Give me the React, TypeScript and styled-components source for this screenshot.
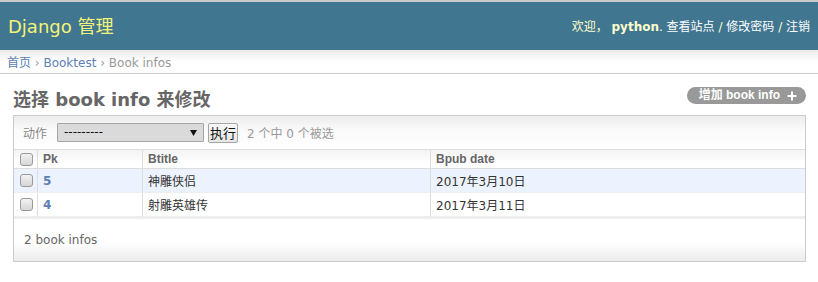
import React from 'react';
import styled, { createGlobalStyle } from 'styled-components';

const GlobalStyle = createGlobalStyle`
  body {
    margin: 0;
    background: #fff;
    color: #333;
    font-family: "DejaVu Sans", "Noto Sans CJK SC", sans-serif;
    font-size: 12px;
  }
  a {
    color: #5b80b2;
    text-decoration: none;
  }
`

const Header = styled.header`
  display: flex;
  justify-content: space-between;
  align-items: center;
  height: 48px;
  padding: 0 8px;
  border-top: 2px solid #c9c9c9;
  background: #417690;
  color: #ffc;
`

const Branding = styled.h1`
  margin: 0;
  padding-top: 1px;
  font-size: 18px;
  line-height: 22px;
  font-weight: normal;
  color: #f4f379;
`

const UserTools = styled.div`
  padding-top: 1px;
  font-size: 12px;
  line-height: 14px;

  strong {
    font-weight: bold;
  }

  a {
    color: #fff;
  }
`

const Breadcrumbs = styled.nav`
  padding: 5px 7px 2px;
  line-height: 16px;
  color: #999;
  background: linear-gradient(#ebebeb, #fff 12px);
  border-bottom: 1px solid #ccc;
`

const Content = styled.main`
  padding: 0 12px 0 13px;
`

const TitleRow = styled.div`
  display: flex;
  justify-content: space-between;
  align-items: flex-start;
  padding-top: 13px;
  margin-bottom: 4px;
`

const Title = styled.h1`
  margin: 2px 0 0;
  font-size: 18px;
  line-height: 22px;
  font-weight: bold;
  color: #666;
`

const AddLink = styled.a`
  display: flex;
  align-items: center;
  gap: 7px;
  height: 17px;
  padding: 0 9px 0 12px;
  border-radius: 9px;
  background: #999;
  font-family: "Liberation Sans", "Noto Sans CJK SC", sans-serif;
  font-size: 12px;
  font-weight: bold;
  line-height: 17px;

  &:link, &:visited {
    color: #fff;
  }
`

const Module = styled.div`
  border: 1px solid #ccc;
`

const Actions = styled.div`
  display: flex;
  align-items: center;
  height: 33px;
  padding: 0 9px;
  border-bottom: 1px solid #ddd;
  background: linear-gradient(#ececec, #fafafa 14px, #fff);
  color: #888;
`

const SelectWrap = styled.span`
  position: relative;
  display: inline-flex;
  margin: 0 4px 0 10px;
`

const ActionSelect = styled.select`
  appearance: none;
  width: 147px;
  height: 19px;
  margin: 0;
  padding: 0 0 0 6px;
  border: 1px solid #a6a6a6;
  border-radius: 1px;
  background: #dadada;
  color: #111;
  font-family: "DejaVu Sans", sans-serif;
  font-size: 12px;
  line-height: 17px;
`

const SelectArrow = styled.svg`
  position: absolute;
  right: 7px;
  top: 7px;
  pointer-events: none;
`

const GoButton = styled.button`
  height: 20px;
  margin: 0 9px 0 0;
  padding: 0 1px;
  border: 1px solid #a6a6a6;
  border-radius: 2px;
  background: linear-gradient(#f8f8f8, #e6e6e6);
  color: #111;
  font-family: "Noto Sans CJK SC", sans-serif;
  font-size: 13px;
  line-height: 18px;
`

const Counter = styled.span`
  color: #999;
`

const Table = styled.table`
  width: 100%;
  table-layout: fixed;
  border-collapse: separate;
  border-spacing: 0;
`

const Th = styled.th<{ $w?: number }>`
  box-sizing: border-box;
  width: ${p => (p.$w ? `${p.$w}px` : 'auto')};
  height: 19px;
  padding: 0 5px;
  border-bottom: 1px solid #ddd;
  background: linear-gradient(#f3f3f3, #fff 70%);
  color: #666;
  font-family: "Liberation Sans", "Noto Sans CJK SC", sans-serif;
  font-size: 12px;
  font-weight: bold;
  text-align: left;
  vertical-align: middle;

  & + & {
    border-left: 1px solid #ddd;
  }
`

const Row = styled.tr<{ $alt?: boolean }>`
  background: ${p => (p.$alt ? '#edf3fe' : '#fff')};
`

const Td = styled.td`
  box-sizing: border-box;
  height: 24px;
  padding: 0 5px;
  border-bottom: 1px solid #eee;
  font-size: 12px;
  vertical-align: middle;

  & + & {
    border-left: 1px solid #ddd;
  }

  a {
    font-weight: bold;
  }
`

const Check = styled.input.attrs({ type: 'checkbox' })`
  appearance: none;
  display: block;
  width: 13px;
  height: 13px;
  margin: 0 0 0 1px;
  border: 1px solid #9a9a9a;
  border-radius: 3px;
  background: linear-gradient(#f2f2f2, #d6d6d6);
`

const Paginator = styled.p`
  margin: 0;
  height: 42px;
  padding: 0 10px;
  border-top: 2px solid #eee;
  background: linear-gradient(#fff 55%, #ececec);
  line-height: 42px;
  color: #666;
`

const books = [
  { pk: 5, title: '神雕侠侣', date: '2017年3月10日' },
  { pk: 4, title: '射雕英雄传', date: '2017年3月11日' },
]

export default function App() {
  return (
    <>
      <GlobalStyle />
      <Header>
        <Branding>Django 管理</Branding>
        <UserTools>
          欢迎， <strong>python</strong>. <a href="#">查看站点</a> / <a href="#">修改密码</a> / <a href="#">注销</a>
        </UserTools>
      </Header>
      <Breadcrumbs>
        <a href="#">首页</a> › <a href="#">Booktest</a> › Book infos
      </Breadcrumbs>
      <Content>
        <TitleRow>
          <Title>选择 book info 来修改</Title>
          <AddLink href="#">
            增加 book info
            <svg width="10" height="10" viewBox="0 0 10 10">
              <path d="M5 0.5v9M0.5 5h9" stroke="#fff" strokeWidth="2" />
            </svg>
          </AddLink>
        </TitleRow>
        <Module>
          <Actions>
            动作
            <SelectWrap>
              <ActionSelect defaultValue="">
                <option value="">---------</option>
                <option value="delete_selected">删除所选的 book infos</option>
              </ActionSelect>
              <SelectArrow width="7" height="6" viewBox="0 0 7 6">
                <path d="M0 0h7L3.5 6z" fill="#111" />
              </SelectArrow>
            </SelectWrap>
            <GoButton>执行</GoButton>
            <Counter>2 个中 0 个被选</Counter>
          </Actions>
          <Table>
            <thead>
              <tr>
                <Th $w={23}><Check /></Th>
                <Th $w={105}>Pk</Th>
                <Th $w={288}>Btitle</Th>
                <Th>Bpub date</Th>
              </tr>
            </thead>
            <tbody>
              {books.map((b, i) => (
                <Row key={b.pk} $alt={i % 2 === 0}>
                  <Td><Check /></Td>
                  <Td><a href="#">{b.pk}</a></Td>
                  <Td>{b.title}</Td>
                  <Td>{b.date}</Td>
                </Row>
              ))}
            </tbody>
          </Table>
          <Paginator>2 book infos</Paginator>
        </Module>
      </Content>
    </>
  );
}
